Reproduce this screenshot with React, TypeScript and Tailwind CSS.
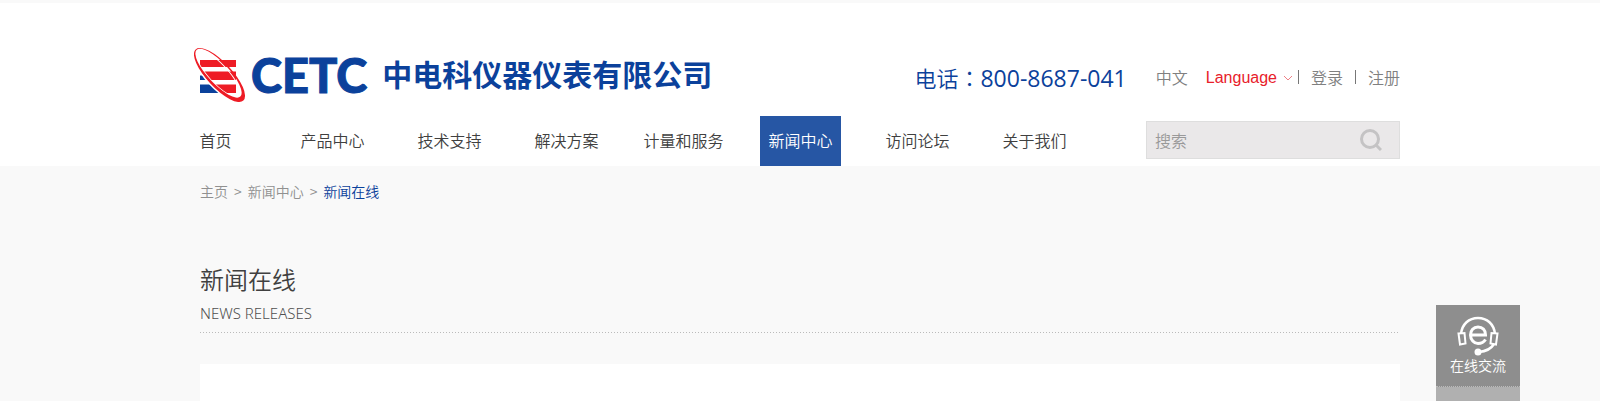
import React from "react";

const navItems = [
  { label: "首页" },
  { label: "产品中心" },
  { label: "技术支持" },
  { label: "解决方案" },
  { label: "计量和服务" },
  { label: "新闻中心", active: true },
  { label: "访问论坛" },
  { label: "关于我们" },
];

function Emblem() {
  return (
    <svg width="52" height="56" viewBox="0 0 52 56" aria-hidden="true">
      <defs>
        <clipPath id="emblem-bars">
          <ellipse cx="25.500" cy="28" rx="34" ry="12" transform="rotate(47 25.500 28)" />
          <path d="M2 2H52V54H50Z" />
        </clipPath>
      </defs>
      <path d="M6 28.500H20V33H6ZM6 37.500H34V46H6Z" fill="#0b419b" />
      <ellipse cx="25.500" cy="28" rx="36" ry="14" transform="rotate(47 25.500 28)" fill="#fff" />
      <path d="M6 13H42V20H6ZM6 24.500H42V33H6ZM6 37.500H42V46H6Z" fill="#ee1c25" clipPath="url(#emblem-bars)" />
      <ellipse cx="24" cy="26.500" rx="31" ry="9.500" transform="rotate(47 24 26.500)" fill="none" stroke="#fff" />
      <path
        fill="#ee1c25"
        fillRule="evenodd"
        transform="rotate(47 25.500 28)"
        d="M-9.500 28A35 12.500 0 0 1 60.500 28A35 12.500 0 0 1 -9.500 28ZM-8.500 27.500A32 10.500 0 0 0 55.500 27.500A32 10.500 0 0 0 -8.500 27.500Z"
      />
    </svg>
  );
}

function Headset() {
  return (
    <svg width="44" height="40" viewBox="0 0 44 40" fill="none" stroke="#fff" aria-hidden="true">
      <path d="M5 18C6 8 13 2 22 2S38 8 39 18" strokeWidth="2.500" />
      <path d="M2.500 17.500L8.500 17L9.500 27.500L4 28.500ZM41.500 17.500L35.500 17L34.500 27.500L40 28.500Z" strokeWidth="2" />
      <path d="M38 28C35 33 29 35.500 23 36" strokeWidth="2.500" />
      <path d="M14.500 19H29.500C29.500 14 26.500 11 22 11S14.500 14.500 14.500 19S18 27.500 22 27.500C25 27.500 28 26 29.500 23.500" strokeWidth="3" />
      <circle cx="22" cy="36" r="3.500" fill="#fff" stroke="none" />
    </svg>
  );
}

export default function App() {
  return (
    <div className="relative flex min-h-screen flex-col bg-[#f9f9f9] pt-[3px] font-['Noto_Sans_CJK_SC',sans-serif] font-[350] text-[#404040]">
      <header className="bg-white">
        <div className="mx-auto max-w-[1200px]">
          <div className="flex h-[113px] items-start justify-between pt-11">
            <a href="#" className="-ml-[6px] flex h-14 items-center text-[#0b419b]">
              <Emblem />
              <span className="ml-[5px] font-['Lato',sans-serif] text-[47px] leading-[56px] font-black [-webkit-text-stroke:1px_#0b419b]">CETC</span>
              <span className="ml-[15px] pb-1 text-[30px] leading-[52px] font-bold">中电科仪器仪表有限公司</span>
            </a>
            <div className="flex h-[60px] items-center text-[16px] leading-6 text-[#808080]">
              <span className="mr-[29px] font-['Noto_Sans_CJK_TC',sans-serif] text-[22px] leading-8 text-[#0b419b]">
                电话：<span className="font-['Open_Sans',sans-serif] text-[23px] font-normal">800-8687-041</span>
              </span>
              <a href="#">中文</a>
              <button type="button" className="ml-[18px] flex items-center gap-[6px] pt-[2px] font-['Liberation_Sans',sans-serif] text-[#e8202a]">
                Language
                <svg width="10" height="6" viewBox="0 0 10 6" fill="none" stroke="#ee8086" aria-hidden="true">
                  <path d="M1 1L5 5L9 1" />
                </svg>
              </button>
              <span className="ml-[5px] h-[14px] w-px bg-[#777]" />
              <a href="#" className="ml-3">登录</a>
              <span className="ml-3 h-[14px] w-px bg-[#777]" />
              <a href="#" className="ml-3">注册</a>
            </div>
          </div>
          <div className="flex h-[50px] items-start justify-between">
            <nav className="-ml-[43px] grid grid-cols-[repeat(8,117px)] text-[16px] leading-[48px]">
              {navItems.map((item) => (
                <a
                  key={item.label}
                  href="#"
                  aria-current={item.active ? "page" : undefined}
                  className={
                    item.active
                      ? "justify-self-center bg-[#2656a4] px-2 pb-[2px] text-white"
                      : "justify-self-center px-2 pb-[2px]"
                  }
                >
                  {item.label}
                </a>
              ))}
            </nav>
            <form className="mt-[5px] flex h-[38px] w-[254px] items-center border border-[#dedede] bg-[#eae8e9] pr-[17px] pl-2">
              <input
                type="search"
                aria-label="搜索"
                placeholder="搜索"
                className="min-w-0 flex-1 bg-transparent text-[16px] leading-6 outline-none placeholder:text-[#999]"
              />
              <button type="button" aria-label="搜索">
                <svg width="22" height="22" viewBox="0 0 22 22" fill="none" stroke="#c4c3c4" strokeWidth="3" aria-hidden="true">
                  <circle cx="10" cy="10" r="8.500" />
                  <path d="M16 16L21 21" />
                </svg>
              </button>
            </form>
          </div>
        </div>
      </header>

      <main className="mx-auto flex w-full max-w-[1200px] flex-1 flex-col">
        <nav aria-label="面包屑" className="flex gap-[6px] pt-[15px] text-[14px] leading-5 text-[#909090]">
          <a href="#">主页</a>
          <span>&gt;</span>
          <a href="#">新闻中心</a>
          <span>&gt;</span>
          <a href="#" className="text-[#0b419b]">新闻在线</a>
        </nav>
        <h1 className="mt-[60px] text-[24px] leading-9">新闻在线</h1>
        <p className="mt-1 font-['Noto_Sans',sans-serif] text-[15px] leading-6 text-[#505050]">NEWS RELEASES</p>
        <div className="mt-[7px] h-px bg-[repeating-linear-gradient(90deg,#bbb_0_1px,transparent_1px_3px)]" />
        <section className="mt-[31px] flex-1 bg-white" />
      </main>

      <aside className="absolute top-[305px] right-20 bottom-0 w-[84px] bg-[#b0b0b0] text-white">
        <a href="#" className="flex h-[82px] flex-col items-center border-b border-dotted border-[#bbb] bg-[#8e8e8e] pt-[11px] text-[14px] leading-[18px]">
          <Headset />
          在线交流
        </a>
      </aside>
    </div>
  );
}
